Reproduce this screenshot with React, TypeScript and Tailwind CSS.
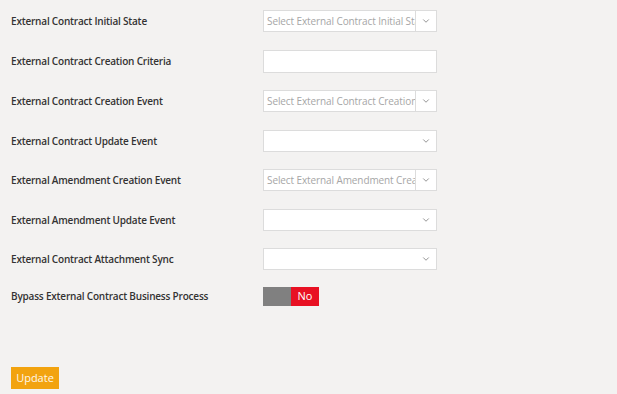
import { ChevronDown } from 'lucide-react'

type Field = {
  label: string
  kind: 'combo' | 'text' | 'select'
  placeholder?: string
  gap: string
}

const fields: Field[] = [
  { label: 'External Contract Initial State', kind: 'combo', placeholder: 'Select External Contract Initial State', gap: 'mt-0' },
  { label: 'External Contract Creation Criteria', kind: 'text', gap: 'mt-[18px]' },
  { label: 'External Contract Creation Event', kind: 'combo', placeholder: 'Select External Contract Creation Event', gap: 'mt-[17px]' },
  { label: 'External Contract Update Event', kind: 'select', gap: 'mt-[18px]' },
  { label: 'External Amendment Creation Event', kind: 'combo', placeholder: 'Select External Amendment Creation Event', gap: 'mt-[17px]' },
  { label: 'External Amendment Update Event', kind: 'select', gap: 'mt-[18px]' },
  { label: 'External Contract Attachment Sync', kind: 'select', gap: 'mt-[17px]' },
]

function FieldControl({ field }: { field: Field }) {
  if (field.kind === 'text') {
    return <div className="h-[23px] w-[174px] border border-[#dcdcdc] bg-white" />
  }
  if (field.kind === 'combo') {
    return (
      <div className="flex h-[22px] w-[174px] border border-[#dcdcdc] bg-white">
        <div className="flex-1 overflow-hidden whitespace-nowrap pl-[3px] text-[10px] leading-[20px] tracking-[-0.1px] text-[#a6a6a6]">
          {field.placeholder}
        </div>
        <div className="flex w-[21px] items-center justify-center border-l border-[#dcdcdc] text-[#555]">
          <ChevronDown size={10} strokeWidth={1.5} />
        </div>
      </div>
    )
  }
  return (
    <div className="flex h-[22px] w-[174px] items-center justify-end border border-[#dcdcdc] bg-white pr-[5px] text-[#555]">
      <ChevronDown size={10} strokeWidth={1.5} />
    </div>
  )
}

export default function App() {
  return (
    <div
      className="h-[394px] w-[617px] bg-[#f3f2f1] pl-[11px] text-[#333]"
      style={{ fontFamily: '"Open Sans", "Noto Sans", sans-serif' }}
    >
      <div className="flex flex-col pt-[10px]">
        {fields.map((f, i) => (
          <div key={i} className={`flex items-center ${f.gap}`}>
            <div className="w-[252px] text-[10px] font-semibold tracking-[-0.2px]">{f.label}</div>
            <FieldControl field={f} />
          </div>
        ))}
        <div className="mt-[17px] flex h-[19px] items-center">
          <div className="w-[252px] text-[10px] font-semibold tracking-[-0.2px]">Bypass External Contract Business Process</div>
          <div className="flex h-[19px] w-[56px]">
            <div className="w-[28px] bg-[#808080]" />
            <div className="flex w-[28px] items-center justify-center bg-[#e81123] text-[11px] text-white">No</div>
          </div>
        </div>
      </div>
      <button className="mt-[61px] h-[22px] w-[48px] bg-[#f2a30f] text-[11px] text-[#fff8ea]">Update</button>
    </div>
  )
}
